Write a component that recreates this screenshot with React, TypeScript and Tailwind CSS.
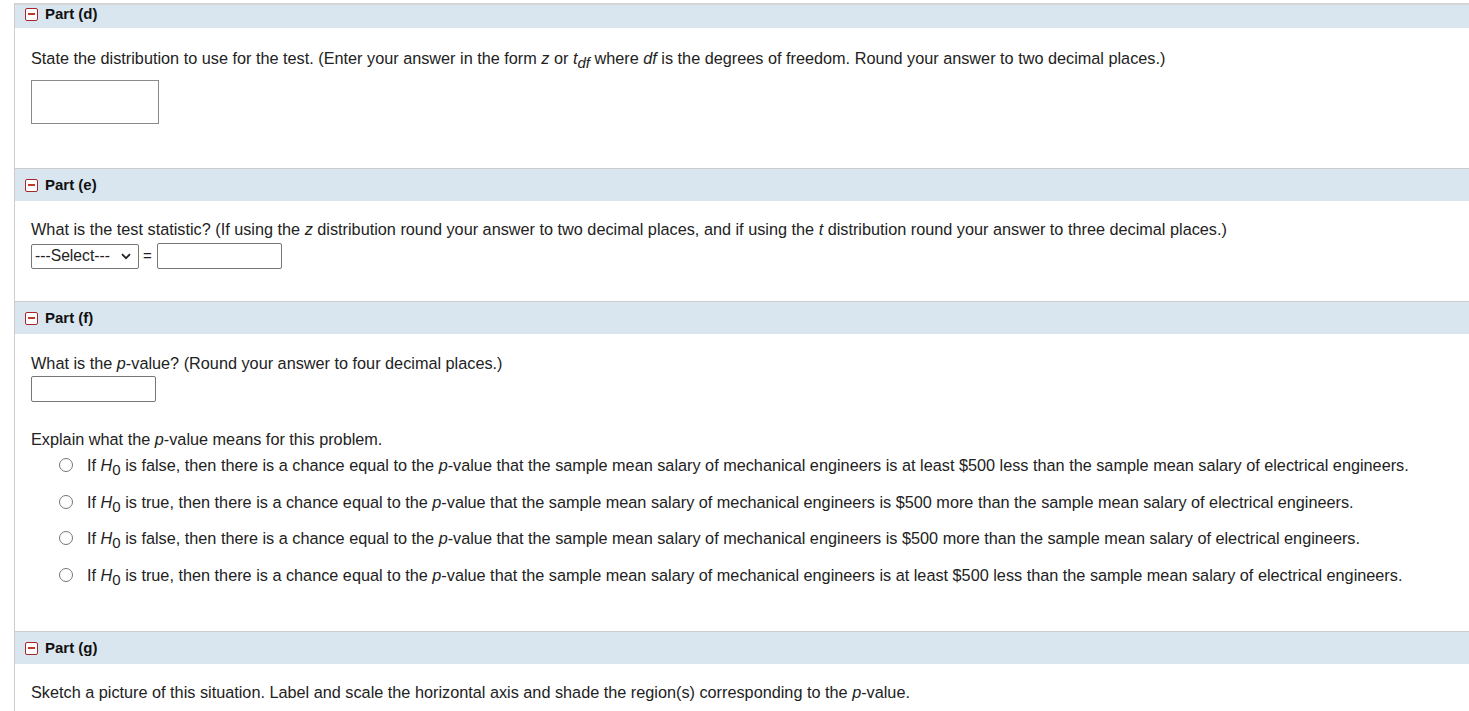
import React from "react";

const font = { fontFamily: '"Liberation Sans", Arial, sans-serif' };

function MinusBox() {
  return (
    <span className="inline-flex h-[13px] w-[13px] items-center justify-center rounded-[2px] border-[1.5px] border-[#a3282b] bg-white">
      <span className="block h-[2px] w-[7px] bg-[#c0392b]" />
    </span>
  );
}

function Header({ label, first }: { label: string; first?: boolean }) {
  return (
    <div
      className={
        first
          ? "flex h-[25px] items-center gap-[7px] border-t-2 border-[#d6d6d6] bg-[#d9e5ef] pl-[10px] pb-[5px]"
          : "flex h-[33px] items-center gap-[7px] border-t border-[#cccccc] bg-[#d9e5ef] pl-[10px]"
      }
    >
      <MinusBox />
      <span className="text-[15px] font-bold text-[#111]">{label}</span>
    </div>
  );
}

function H0() {
  return (
    <>
      <i>H</i>
      <sub className="relative top-[4px] text-[15px]">0</sub>
    </>
  );
}

function Radio({ children }: { children: React.ReactNode }) {
  return (
    <div className="flex h-[20px] items-center pl-[28px]">
      <span className="mr-[14px] inline-block h-[14px] w-[14px] rounded-full border border-[#767676] bg-white" />
      <span>{children}</span>
    </div>
  );
}

export default function App() {
  return (
    <div className="min-h-[711px] bg-white pt-[3px] text-[16.25px] leading-[20px] text-[#222]" style={font}>
      <div className="ml-[14px] border-l border-[#cccccc]">
        {/* Part (d) */}
        <Header label="Part (d)" first />
        <div className="px-[16px] pt-[20px] pb-[44px]">
          <p>
            State the distribution to use for the test. (Enter your answer in the form <i>z</i> or{" "}
            <i>t</i>
            <sub className="relative top-[4px] text-[15px] italic">df</sub> where <i>df</i> is the degrees of
            freedom. Round your answer to two decimal places.)
          </p>
          <div className="mt-[12px] h-[44px] w-[128px] border border-[#8a8a8a] bg-white" />
        </div>

        {/* Part (e) */}
        <Header label="Part (e)" />
        <div className="px-[16px] pt-[18px] pb-[32px]">
          <p>
            What is the test statistic? (If using the <i>z</i> distribution round your answer to two decimal
            places, and if using the <i>t</i> distribution round your answer to three decimal places.)
          </p>
          <div className="mt-[4px] flex items-center">
            <div className="flex h-[25px] w-[108px] items-center justify-between rounded-[2px] border border-[#767676] pl-[3px] pr-[7px] text-[15.7px]">
              <span>---Select---</span>
              <svg width="10" height="7" viewBox="0 0 10 7" className="mt-[1px]">
                <path d="M1 1.2 L5 5.2 L9 1.2" fill="none" stroke="#222" strokeWidth="1.8" />
              </svg>
            </div>
            <span className="ml-[4px] mr-[5px] text-[15px]">=</span>
            <div className="h-[26px] w-[125px] rounded-[2px] border border-[#767676]" />
          </div>
        </div>

        {/* Part (f) */}
        <Header label="Part (f)" />
        <div className="px-[16px] pt-[19px] pb-[46px]">
          <p>
            What is the <i>p</i>-value? (Round your answer to four decimal places.)
          </p>
          <div className="mt-[3px] h-[26px] w-[125px] rounded-[2px] border border-[#767676]" />
          <p className="mt-[27px]">
            Explain what the <i>p</i>-value means for this problem.
          </p>
          <div className="mt-[6px] flex flex-col gap-[16.7px]">
            <Radio>
              If <H0 /> is false, then there is a chance equal to the <i>p</i>-value that the sample mean salary of
              mechanical engineers is at least $500 less than the sample mean salary of electrical engineers.
            </Radio>
            <Radio>
              If <H0 /> is true, then there is a chance equal to the <i>p</i>-value that the sample mean salary of
              mechanical engineers is $500 more than the sample mean salary of electrical engineers.
            </Radio>
            <Radio>
              If <H0 /> is false, then there is a chance equal to the <i>p</i>-value that the sample mean salary of
              mechanical engineers is $500 more than the sample mean salary of electrical engineers.
            </Radio>
            <Radio>
              If <H0 /> is true, then there is a chance equal to the <i>p</i>-value that the sample mean salary of
              mechanical engineers is at least $500 less than the sample mean salary of electrical engineers.
            </Radio>
          </div>
        </div>

        {/* Part (g) */}
        <Header label="Part (g)" />
        <div className="px-[16px] pt-[18px] pb-[40px]">
          <p>
            Sketch a picture of this situation. Label and scale the horizontal axis and shade the region(s)
            corresponding to the <i>p</i>-value.
          </p>
        </div>
      </div>
    </div>
  );
}
